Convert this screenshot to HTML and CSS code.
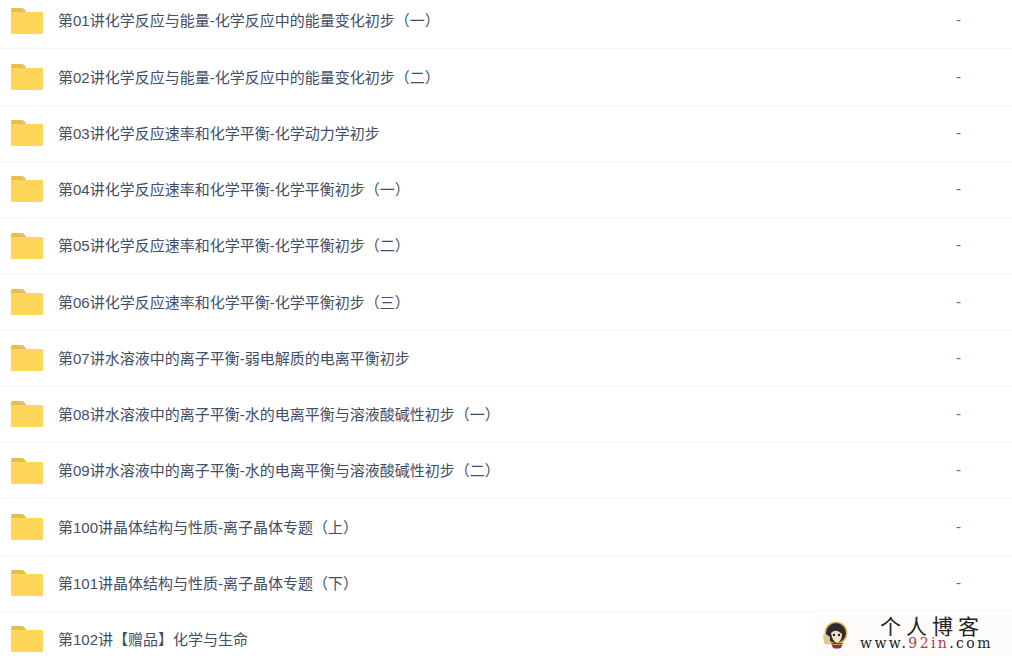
FILE: index.html
```html
<!DOCTYPE html>
<html lang="en">
<head>
    <meta charset="UTF-8">
    <title>Title</title>
    <link rel="stylesheet" href="styles.css">
</head>
<body>
<svg class="defs" width="0" height="0">
    <symbol id="folder" viewBox="0 0 32 26">
        <path fill="#e8bd50" d="M0 1.500Q0 0 1.500 0H10.500Q12 0 13 1L16 4.500H0Z"/>
        <path fill="#ffd659" d="M1 4H31Q32 4 32 5V25Q32 26 31 26H1Q0 26 0 25V5Q0 4 1 4Z"/>
    </symbol>
</svg>
<div id="list">
    <div class="row"><svg class="icon"><use href="#folder"/></svg><span class="name">第01讲化学反应与能量-化学反应中的能量变化初步（一）</span><span class="size">-</span></div>
    <div class="row"><svg class="icon"><use href="#folder"/></svg><span class="name">第02讲化学反应与能量-化学反应中的能量变化初步（二）</span><span class="size">-</span></div>
    <div class="row"><svg class="icon"><use href="#folder"/></svg><span class="name">第03讲化学反应速率和化学平衡-化学动力学初步</span><span class="size">-</span></div>
    <div class="row"><svg class="icon"><use href="#folder"/></svg><span class="name">第04讲化学反应速率和化学平衡-化学平衡初步（一）</span><span class="size">-</span></div>
    <div class="row"><svg class="icon"><use href="#folder"/></svg><span class="name">第05讲化学反应速率和化学平衡-化学平衡初步（二）</span><span class="size">-</span></div>
    <div class="row"><svg class="icon"><use href="#folder"/></svg><span class="name">第06讲化学反应速率和化学平衡-化学平衡初步（三）</span><span class="size">-</span></div>
    <div class="row"><svg class="icon"><use href="#folder"/></svg><span class="name">第07讲水溶液中的离子平衡-弱电解质的电离平衡初步</span><span class="size">-</span></div>
    <div class="row"><svg class="icon"><use href="#folder"/></svg><span class="name">第08讲水溶液中的离子平衡-水的电离平衡与溶液酸碱性初步（一）</span><span class="size">-</span></div>
    <div class="row"><svg class="icon"><use href="#folder"/></svg><span class="name">第09讲水溶液中的离子平衡-水的电离平衡与溶液酸碱性初步（二）</span><span class="size">-</span></div>
    <div class="row"><svg class="icon"><use href="#folder"/></svg><span class="name">第100讲晶体结构与性质-离子晶体专题（上）</span><span class="size">-</span></div>
    <div class="row"><svg class="icon"><use href="#folder"/></svg><span class="name">第101讲晶体结构与性质-离子晶体专题（下）</span><span class="size">-</span></div>
    <div class="row"><svg class="icon"><use href="#folder"/></svg><span class="name">第102讲【赠品】化学与生命</span><span class="size"></span></div>
</div>
<!-- 水印 -->
<div id="mark">
    <svg class="face" viewBox="0 0 26 28">
        <circle cx="14" cy="12" r="11.500" fill="#d8b860"/>
        <circle cx="14" cy="12" r="10" fill="#2e2b30"/>
        <path fill="#f4e2c8" d="M9 12Q14 7 20 13Q20 20 15 22Q10 20 9 12Z"/>
        <path fill="#d9c89a" d="M1 14Q4 12 8 16V23Q4 25 2 22Z"/>
        <path fill="#7a3560" d="M9 22H21L19 27Q14 28 11 27Z"/>
        <path fill="#d8a040" d="M10 23H20V24H10Z"/>
        <circle cx="12" cy="14" r="1.200" fill="#222"/>
        <circle cx="17" cy="14" r="1.200" fill="#222"/>
    </svg>
    <div class="mark-text">
        <div class="mark-title">个人博客</div>
        <div class="mark-url">www.<span class="red">92in</span>.com</div>
    </div>
</div>
</body>
</html>
```
FILE: styles.css
```css
* {
    box-sizing: border-box;
}

html, body {
    height: 656px;
    overflow: hidden;
}

body {
    margin: 0;
    background-color: #fff;
    font-family: "Liberation Sans", "Noto Sans CJK SC", sans-serif;
    font-size: 15px;
    color: #424e67;
}

.defs {
    position: absolute;
}

#list {
    margin-top: -6.95px;
}

.row {
    display: flex;
    align-items: center;
    height: 56.25px;
    padding-left: 11px;
    border-bottom: 1px solid #f3f7fd;
}

.icon {
    width: 32px;
    height: 26px;
    flex: none;
    margin-right: 15px;
}

.name {
    flex: 1;
    white-space: nowrap;
    padding-bottom: 1.5px;
}

.size {
    width: 56px;
    flex: none;
    color: #666;
    padding-bottom: 1.5px;
}

#mark {
    position: absolute;
    left: 815px;
    top: 614px;
    width: 197px;
    height: 42px;
    display: flex;
    align-items: flex-start;
    background-color: #fdfcfa;
    padding: 3px 0 0 7px;
}

.face {
    width: 26px;
    height: 28px;
    flex: none;
    margin-top: 4px;
}

.mark-text {
    margin-left: 12px;
    color: #222;
}

.mark-title {
    font-family: "Liberation Serif", "Noto Sans CJK SC", serif;
    font-size: 21px;
    line-height: 20px;
    letter-spacing: 5px;
    padding-left: 20px;
}

.mark-url {
    font-family: "DejaVu Serif", serif;
    font-size: 14px;
    line-height: 13px;
    letter-spacing: 2.4px;
    white-space: nowrap;
}

.red {
    color: #a8404a;
}
```
